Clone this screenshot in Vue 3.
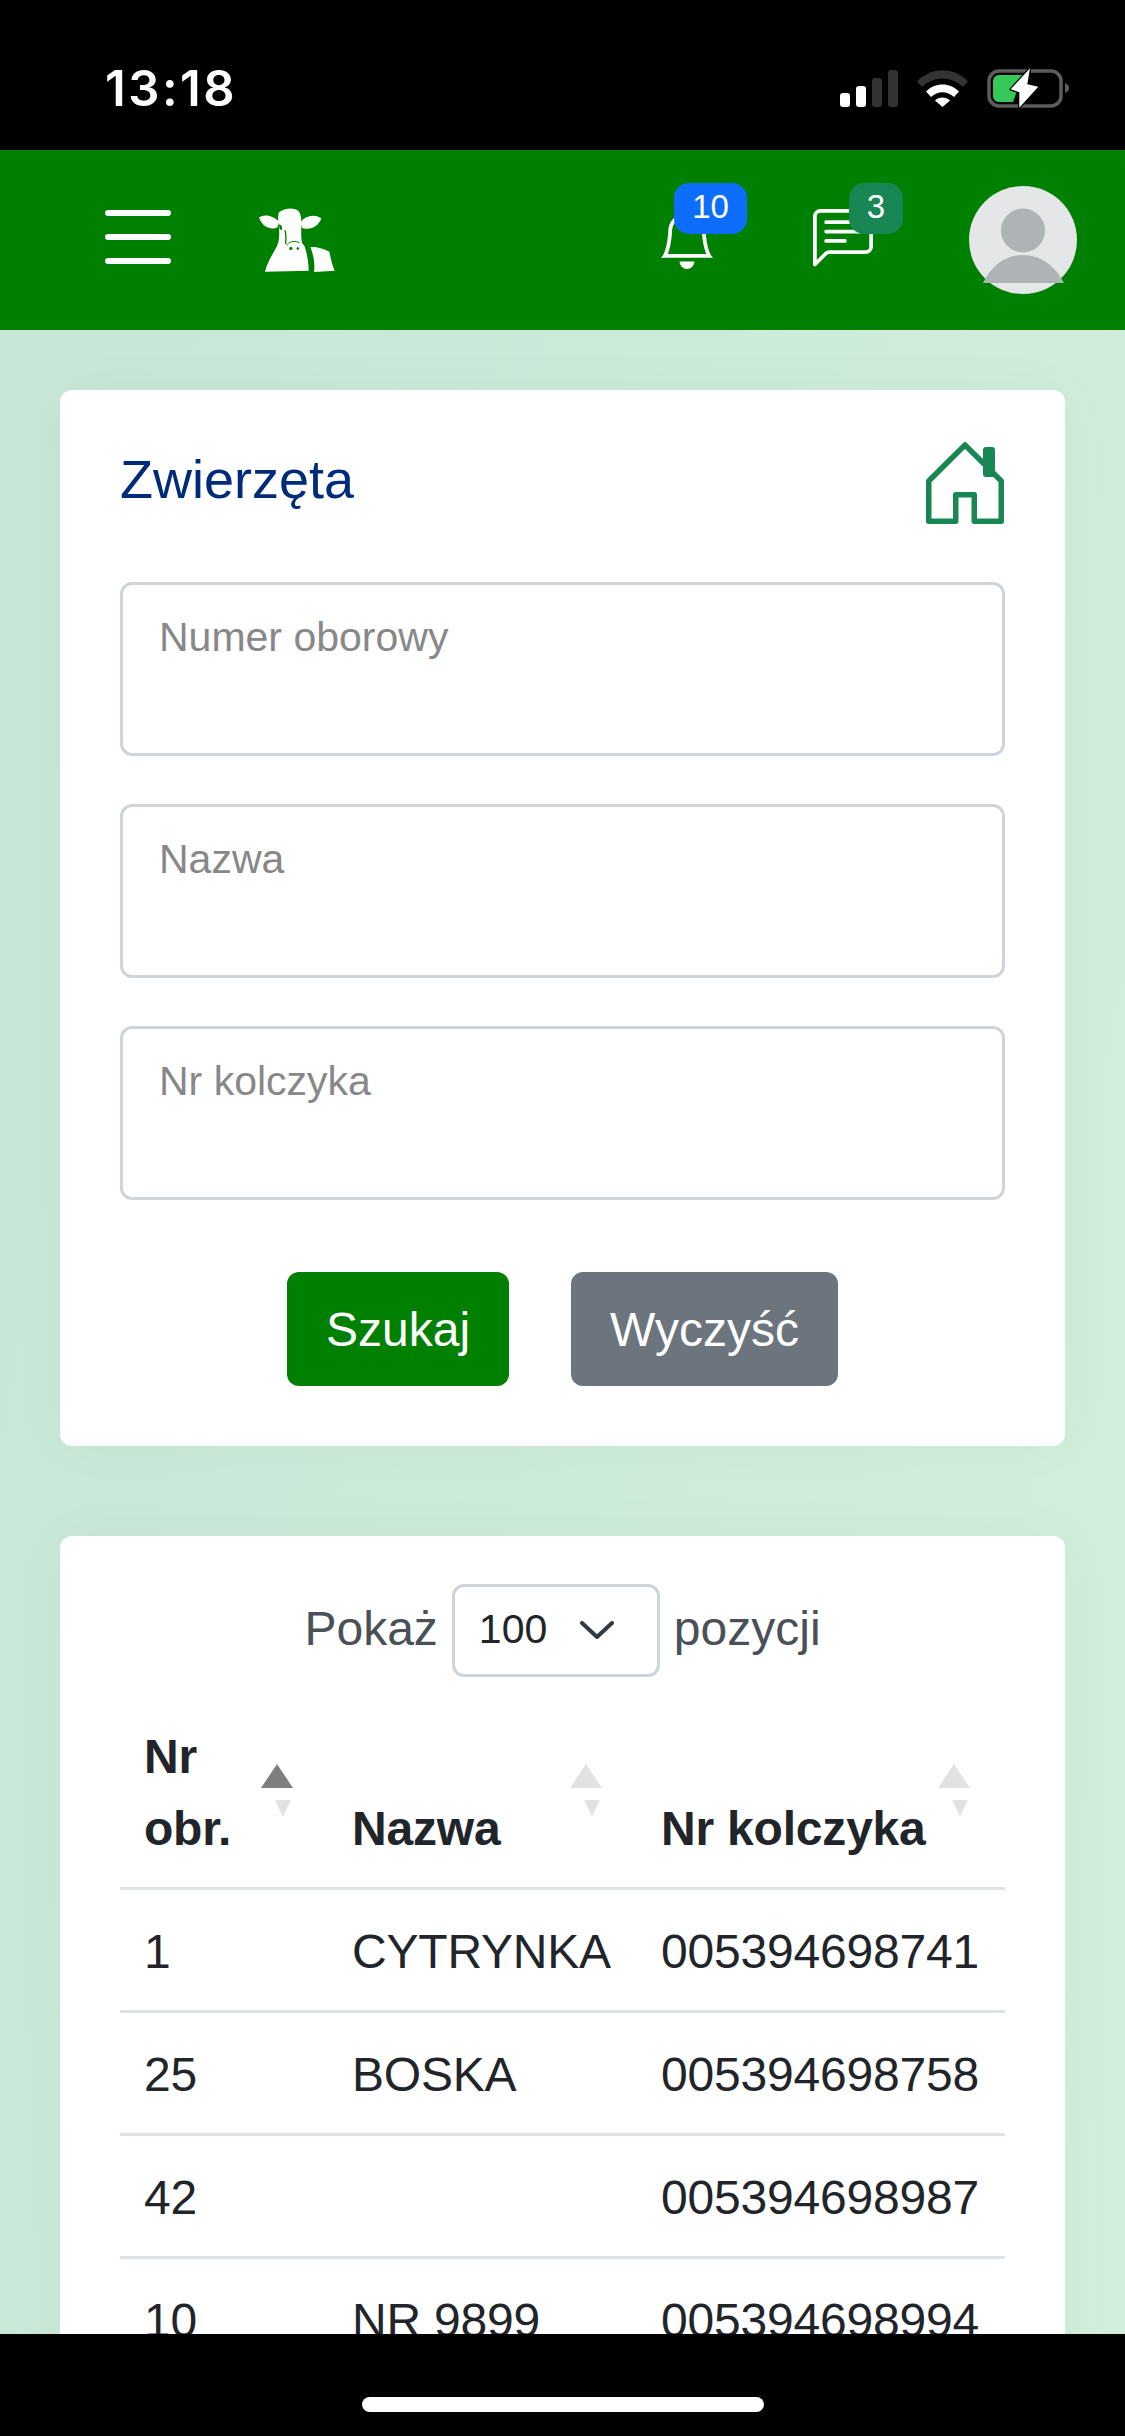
<script setup>
const fields = ['Numer oborowy', 'Nazwa', 'Nr kolczyka']

const rows = [
  { nr: '1', name: 'CYTRYNKA', tag: '005394698741' },
  { nr: '25', name: 'BOSKA', tag: '005394698758' },
  { nr: '42', name: '', tag: '005394698987' },
  { nr: '10', name: 'NR 9899', tag: '005394698994' }
]
</script>

<template>
  <div class="phone">
    <div class="status-bar">
      <span class="time">13:18</span>
      <div class="status-icons">
        <svg class="signal" width="58" height="37" viewBox="0 0 58 37">
          <rect x="0" y="23" width="10" height="14" rx="3" fill="#fff" />
          <rect x="16" y="16" width="10" height="21" rx="3" fill="#fff" />
          <rect x="32" y="8" width="10" height="29" rx="3" fill="#333" />
          <rect x="48" y="0" width="10" height="37" rx="3" fill="#333" />
        </svg>
        <svg class="wifi" width="51" height="37" viewBox="0 0 51 37">
          <path d="M0 11.500C14-3.500 37-3.500 51 11.500L46 17C34 5.500 17 5.500 5 17Z" fill="#333" />
          <path d="M9 21.500C18 12 33 12 42 21.500L37 27C30 20.500 21 20.500 14 27Z" fill="#fff" />
          <path d="M18 30.500C22 26.500 29 26.500 33 30.500L25.500 37Z" fill="#fff" />
        </svg>
        <svg class="battery" width="84" height="44" viewBox="0 0 84 44">
          <rect x="2" y="5" width="72" height="35" rx="10" fill="none" stroke="#5c5c5c" stroke-width="3.500" />
          <path d="M78 17c3 1 4 3 4 5s-1 4-4 5Z" fill="#5c5c5c" />
          <path d="M12 9H36L26 36H12a6 6 0 0 1-6-6V15a6 6 0 0 1 6-6Z" fill="#34c759" />
          <path d="M43 2.300L23.700 23.300L32.300 26.300L32.300 41.700L51.300 20.700L40.300 18.300Z" fill="#fff" stroke="#000" stroke-width="2.500" stroke-linejoin="round" paint-order="stroke" />
        </svg>
      </div>
    </div>

    <header class="topbar">
      <div class="burger"><span></span><span></span><span></span></div>
      <svg class="cow" width="78" height="68" viewBox="85 70 235 205">
        <path d="M88 108C100 98 125 98 148 120L143 138C125 145 100 140 88 108Z" fill="#fff" />
        <path d="M212 122C232 100 255 98 276 110C268 132 245 148 218 139Z" fill="#fff" />
        <path d="M148 92C165 80 190 76 207 88C216 100 215 112 215 125C216 150 214 165 218 185L227 195C234 220 237 245 238 268L106 271C114 240 130 218 143 192C150 175 150 150 147 130C145 115 145 100 148 92Z" fill="#fff" />
        <path d="M243 197C262 196 282 202 300 211C304 230 308 250 316 268L254 272C257 245 252 220 243 197Z" fill="#fff" />
        <path d="M147 128L156 132L158 146L150 142Z" fill="#008000" />
        <path d="M166 146C170 158 170 172 168 188" fill="none" stroke="#008000" stroke-width="4" />
        <path d="M172 192C175 182 192 175 210 184" fill="none" stroke="#008000" stroke-width="3" />
        <circle cx="184" cy="201" r="5" fill="#008000" />
        <circle cx="205" cy="201" r="4" fill="#008000" />
        <path d="M226 190C236 215 241 245 245 272" fill="none" stroke="#008000" stroke-width="4" />
      </svg>

      <div class="bell">
        <svg width="60" height="60" viewBox="0 0 16 16" fill="#fff">
          <path d="M8 16a2 2 0 0 0 2-2H6a2 2 0 0 0 2 2zM8 1.918l-.797.161A4.002 4.002 0 0 0 4 6c0 .628-.134 2.197-.459 3.742-.16.767-.376 1.566-.663 2.258h10.244c-.287-.692-.502-1.490-.663-2.258C12.134 8.197 12 6.628 12 6a4.002 4.002 0 0 0-3.203-3.920L8 1.917zM14.220 12c.223.447.481.801.78 1H1c.299-.199.557-.553.78-1C2.680 10.200 3 6.880 3 6c0-2.420 1.720-4.440 4.005-4.901a1 1 0 1 1 1.990 0A5.002 5.002 0 0 1 13 6c0 .880.320 4.200 1.220 6z" />
        </svg>
        <span class="badge badge-blue">10</span>
      </div>

      <div class="chat">
        <svg width="60" height="60" viewBox="0 0 16 16" fill="#fff">
          <path d="M14 1a1 1 0 0 1 1 1v8a1 1 0 0 1-1 1H4.414A2 2 0 0 0 3 11.586l-2 2V2a1 1 0 0 1 1-1h12zM2 0a2 2 0 0 0-2 2v12.793a.5.5 0 0 0 .854.353l2.853-2.853A1 1 0 0 1 4.414 12H14a2 2 0 0 0 2-2V2a2 2 0 0 0-2-2H2z" />
          <path d="M3 3.500a.5.5 0 0 1 .5-.5h9a.5.5 0 0 1 0 1h-9a.5.5 0 0 1-.5-.5zM3 6a.5.5 0 0 1 .5-.5h9a.5.5 0 0 1 0 1h-9A.5.5 0 0 1 3 6zm0 2.500a.5.5 0 0 1 .5-.5h5a.5.5 0 0 1 0 1h-5a.5.5 0 0 1-.5-.5z" />
        </svg>
        <span class="badge badge-green">3</span>
      </div>

      <svg class="avatar" width="108" height="108" viewBox="0 0 108 108">
        <circle cx="54" cy="54" r="54" fill="#e4e6e8" />
        <circle cx="54" cy="44.500" r="22" fill="#aeb3b6" />
        <path d="M14 97C22 80 36 69 54 69S86 80 95 97Z" fill="#aeb3b6" />
      </svg>
    </header>

    <main class="content">
      <section class="card search-card">
        <div class="card-head">
          <h1 class="title">Zwierzęta</h1>
          <svg class="home" width="78" height="84" viewBox="0 0 78 84">
            <rect x="57" y="6" width="12" height="30" rx="3" fill="#198754" />
            <path d="M39 4L75.250 40V80.250H48.250V53.750H29.750V80.250H2.750V40Z" fill="none" stroke="#198754" stroke-width="5.500" stroke-linejoin="round" />
          </svg>
        </div>

        <div class="fields">
          <input v-for="field in fields" :key="field" class="field" type="text" :placeholder="field" />
        </div>

        <div class="actions">
          <button class="btn btn-green">Szukaj</button>
          <button class="btn btn-grey">Wyczyść</button>
        </div>
      </section>

      <section class="card table-card">
        <div class="page-size">
          <span class="page-label">Pokaż</span>
          <div class="select">
            <span>100</span>
            <svg width="34" height="18" viewBox="0 0 34 18" fill="none" stroke="#343a40" stroke-width="4" stroke-linecap="round" stroke-linejoin="round">
              <path d="M2 2L17 16L32 2" />
            </svg>
          </div>
          <span class="page-label">pozycji</span>
        </div>

        <table class="animals">
          <colgroup>
            <col class="col-nr" />
            <col class="col-name" />
            <col />
          </colgroup>
          <thead>
            <tr>
              <th>Nr<br />obr.<span class="sort-up active"></span><span class="sort-down"></span></th>
              <th>Nazwa<span class="sort-up"></span><span class="sort-down"></span></th>
              <th>Nr kolczyka<span class="sort-up"></span><span class="sort-down"></span></th>
            </tr>
          </thead>
          <tbody>
            <tr v-for="row in rows" :key="row.tag">
              <td>{{ row.nr }}</td>
              <td>{{ row.name }}</td>
              <td>{{ row.tag }}</td>
            </tr>
          </tbody>
        </table>
      </section>
    </main>

    <div class="home-bar"><span></span></div>
  </div>
</template>

<style>
html,
body {
  margin: 0;
  background: #000;
}
</style>

<style scoped>
.phone {
  position: relative;
  width: 1125px;
  height: 2436px;
  overflow: hidden;
  font-family: "Liberation Sans", Arial, sans-serif;
  background: linear-gradient(100deg, #c7e6d6, #d2efdb);
  color: #212529;
}

.status-bar {
  display: flex;
  justify-content: space-between;
  height: 150px;
  background: #000;
  box-sizing: border-box;
  padding: 0 54px 0 105px;
}

.time {
  margin-top: 59px;
  font-family: Inter, sans-serif;
  font-size: 49px;
  line-height: 60px;
  font-weight: 600;
  letter-spacing: 2.500px;
  color: #fff;
}

.status-icons {
  display: flex;
  align-items: flex-start;
  padding-top: 67px;
}

.signal {
  margin-top: 3px;
}

.wifi {
  margin: 3px 0 0 19px;
}

.battery {
  margin: -1px 0 0 19px;
}

.topbar {
  display: flex;
  align-items: center;
  height: 180px;
  box-sizing: border-box;
  padding: 0 48px 0 105px;
  background: #008000;
}

.burger {
  display: flex;
  flex-direction: column;
  gap: 18px;
  width: 66px;
  margin-top: -6px;
}

.burger span {
  height: 6px;
  border-radius: 3px;
  background: #fff;
}

.cow {
  margin-left: 87px;
  margin-top: -2px;
}

.bell,
.chat {
  position: relative;
  display: flex;
  width: 60px;
  height: 60px;
  margin-top: -2px;
}

.bell {
  margin-left: auto;
  left: 3px;
}

.chat {
  margin-left: 99px;
}

.avatar {
  margin-left: 96px;
}

.badge {
  position: absolute;
  top: -26px;
  height: 51px;
  border-radius: 15px;
  font-size: 33px;
  line-height: 48px;
  text-align: center;
  color: #fff;
}

.badge-blue {
  left: 17px;
  width: 73px;
  background: #0d6efd;
}

.badge-green {
  left: 36px;
  width: 54px;
  background: #198754;
}

.content {
  display: flex;
  flex-direction: column;
  gap: 90px;
  padding: 60px 60px 0;
}

.card {
  background: #fff;
  border-radius: 12px;
  box-shadow: 0 0 60px rgba(0, 60, 60, 0.03);
}

.search-card {
  padding: 51px 60px 60px;
}

.card-head {
  display: flex;
  justify-content: space-between;
  align-items: flex-start;
}

.home {
  margin-right: 1px;
}

.title {
  margin: 0;
  padding-top: 6px;
  font-size: 54px;
  line-height: 65px;
  font-weight: 400;
  color: #002a7a;
}

.fields {
  display: flex;
  flex-direction: column;
  gap: 48px;
  margin-top: 57px;
}

.field {
  display: block;
  box-sizing: border-box;
  width: 100%;
  height: 174px;
  padding: 20px 36px 84px 36px;
  border: 3px solid #ced4da;
  border-radius: 12px;
  outline: none;
  background: #fff;
  font-family: inherit;
  font-size: 41px;
}

.field::placeholder {
  color: #888;
  opacity: 1;
}

.actions {
  display: flex;
  justify-content: center;
  gap: 62px;
  margin-top: 72px;
}

.btn {
  height: 114px;
  padding: 0 39px;
  border: none;
  border-radius: 12px;
  font-family: inherit;
  font-size: 48px;
  color: #fff;
}

.btn-green {
  background: #008000;
}

.btn-grey {
  background: #6c757d;
}

.table-card {
  padding: 48px 60px 0;
}

.page-size {
  display: flex;
  justify-content: center;
  align-items: center;
  gap: 14px;
  font-size: 48px;
  color: #495057;
}

.page-label {
  margin-bottom: 4px;
}

.select {
  display: flex;
  align-items: center;
  gap: 33px;
  box-sizing: border-box;
  width: 208px;
  height: 93px;
  padding: 0 0 2px 24px;
  border: 3px solid #ced4da;
  border-radius: 12px;
  font-size: 41px;
  color: #212529;
}

.animals {
  width: 100%;
  margin-top: 18px;
  border-collapse: collapse;
  table-layout: fixed;
  font-size: 48px;
  line-height: 72px;
  letter-spacing: -0.2px;
}

.col-nr {
  width: 208px;
}

.col-name {
  width: 309px;
}

.animals th {
  position: relative;
  padding: 26px 24px 22px;
  border-bottom: 3px solid #dee2e6;
  font-weight: 700;
  text-align: left;
  vertical-align: bottom;
}

.animals td {
  padding: 26px 24px 22px;
  border-bottom: 3px solid #dee2e6;
  white-space: nowrap;
}

.sort-up,
.sort-down {
  position: absolute;
  width: 0;
  height: 0;
  border-left-style: solid;
  border-right-style: solid;
  border-left-color: transparent;
  border-right-color: transparent;
}

.sort-up {
  right: 35px;
  bottom: 99px;
  border-width: 0 16px 24px;
  border-bottom: 24px solid #e2e2e2;
}

.sort-up.active {
  border-bottom-color: #7f7f7f;
}

.sort-down {
  right: 37px;
  bottom: 70px;
  border-width: 17px 8px 0;
  border-top: 17px solid #e2e2e2;
}

.home-bar {
  position: absolute;
  left: 0;
  right: 0;
  bottom: 0;
  display: flex;
  justify-content: center;
  height: 102px;
  background: #000;
}

.home-bar span {
  width: 402px;
  height: 15px;
  margin-top: 63px;
  border-radius: 8px;
  background: #fff;
}
</style>
